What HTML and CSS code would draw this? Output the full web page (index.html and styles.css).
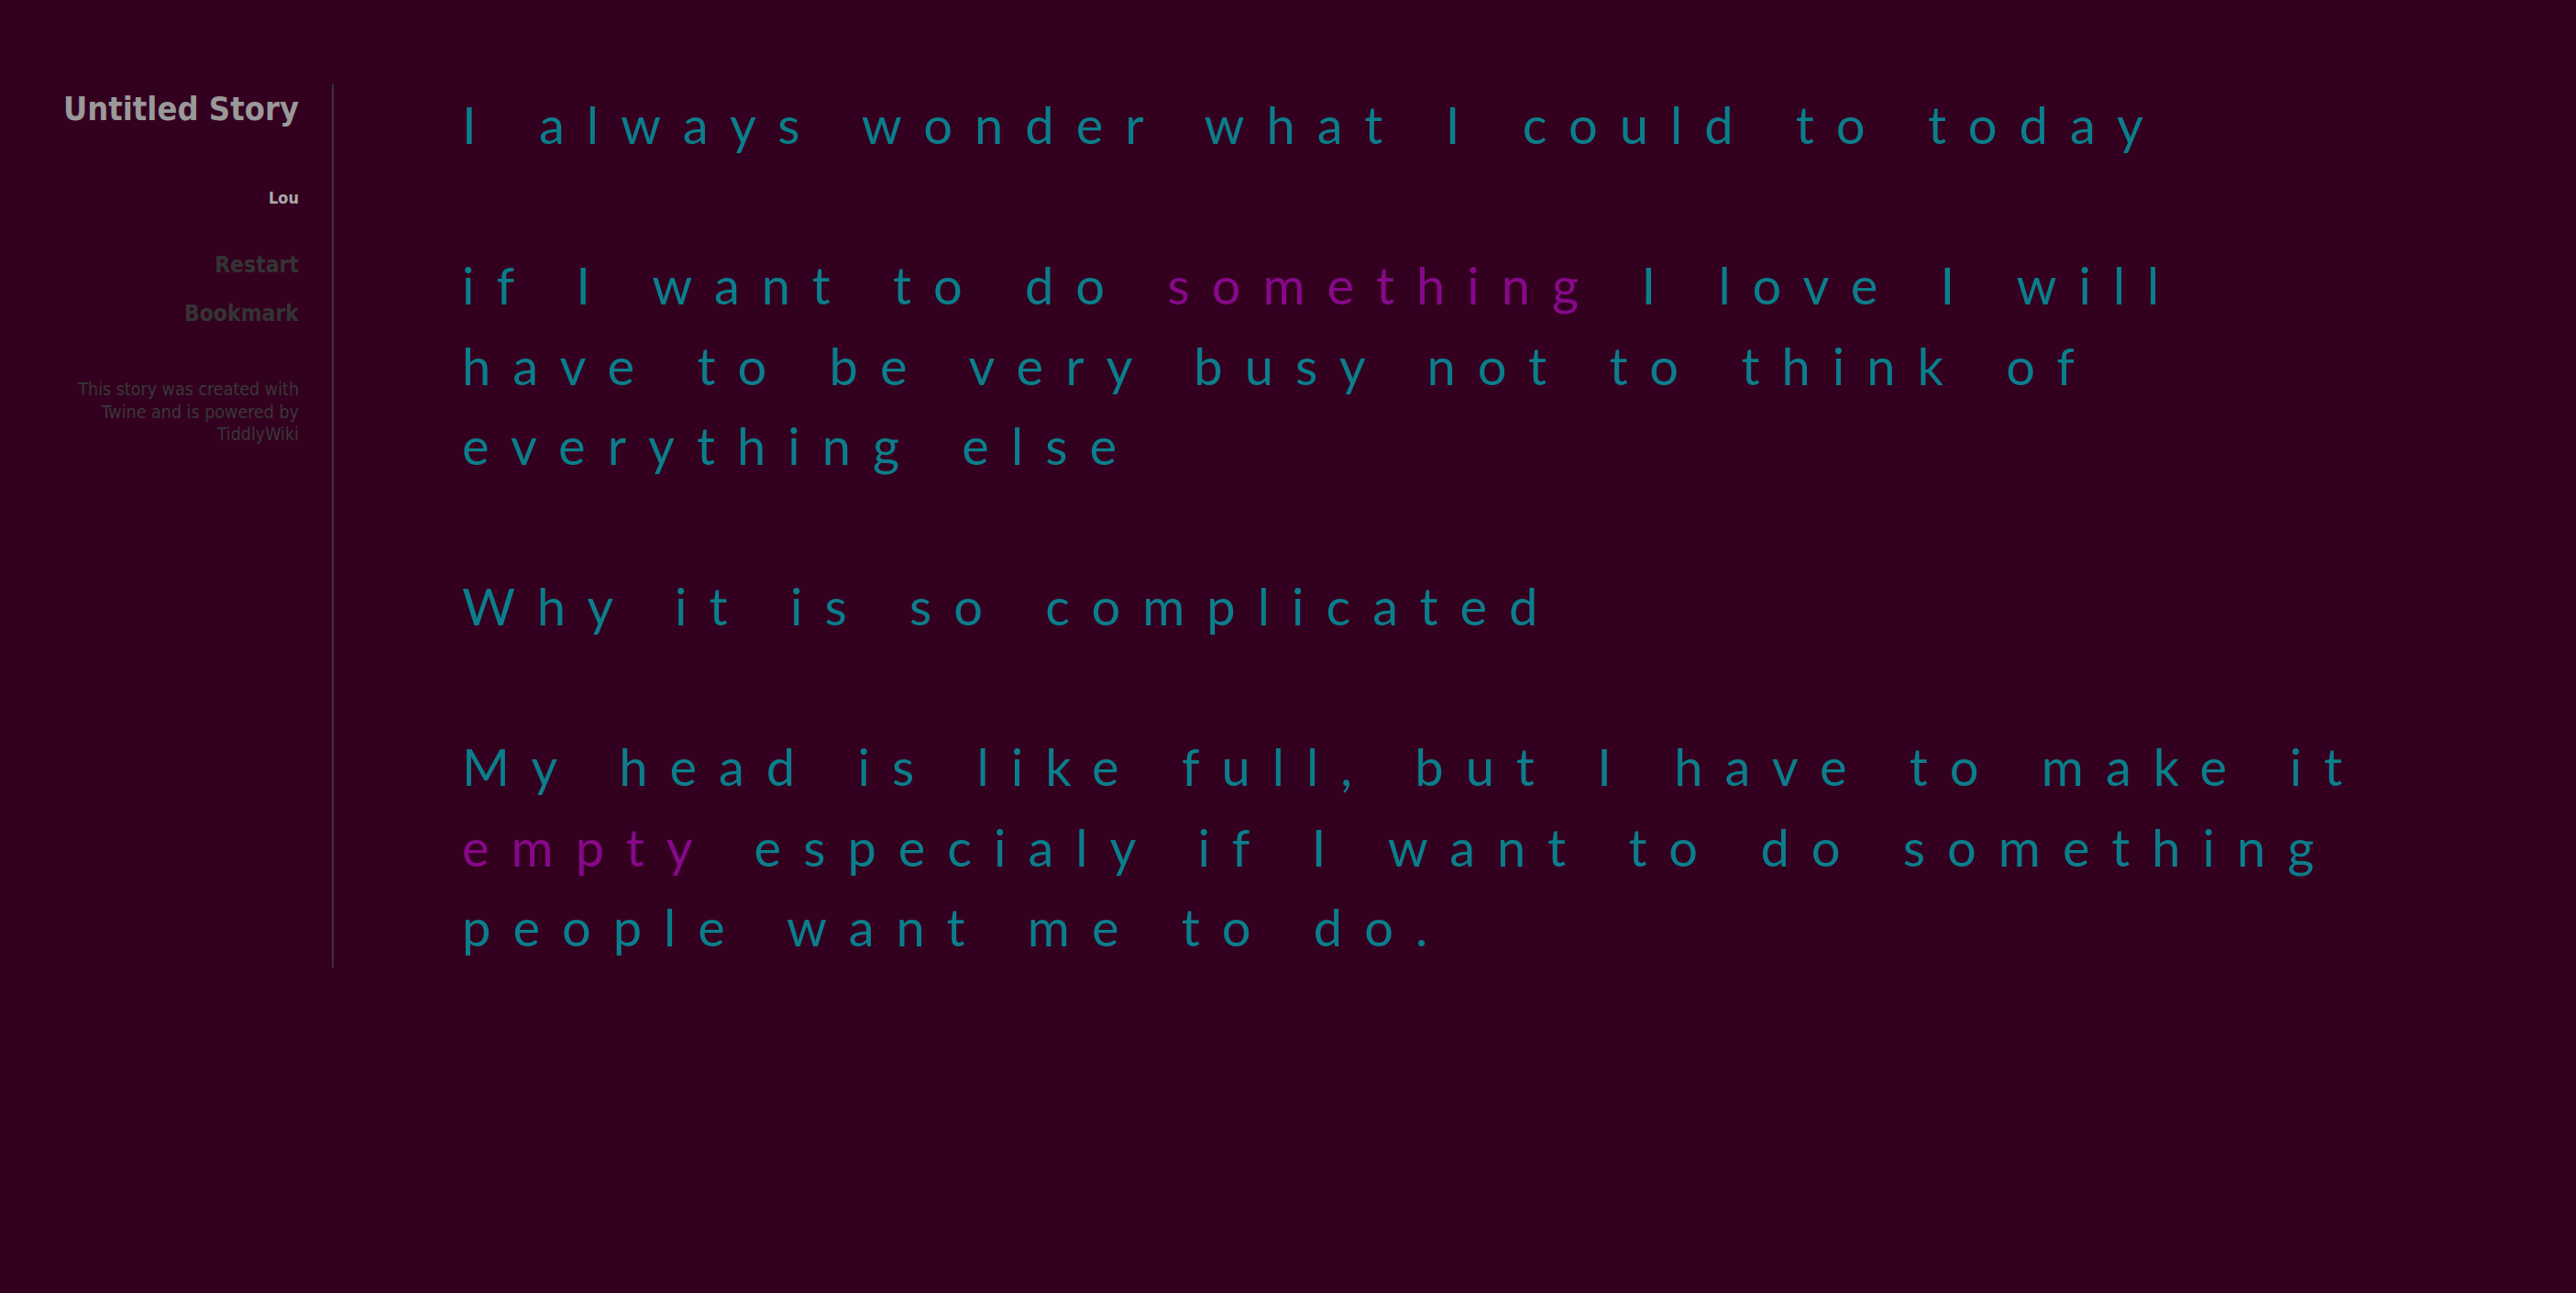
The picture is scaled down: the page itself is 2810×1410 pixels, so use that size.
FILE: index.html
```html
<!DOCTYPE html>
<html lang="en">
<head>
<meta charset="utf-8">
<title>Untitled Story</title>
<link rel="stylesheet" href="styles.css">
</head>
<body>
<div class="page">
  <aside class="sidebar">
    <h1 class="story-title">Untitled Story</h1>
    <div class="author">Lou</div>
    <ul class="menu">
      <li class="menu-item">Restart</li>
      <li class="menu-item">Bookmark</li>
    </ul>
    <p class="credits">This story was created with Twine and is powered by TiddlyWiki</p>
  </aside>
  <main class="passages">
    <div class="passage">
      <p class="para">I always wonder what I could to today</p>
      <p class="para">if I want to do <span class="link">something</span> I love I will have to be very busy not to think of everything else</p>
      <p class="para">Why it is so complicated</p>
      <p class="para">My head is like full, but I have to make it <span class="link">empty</span> especialy if I want to do something people want me to do.</p>
    </div>
  </main>
</div>
</body>
</html>
```
FILE: styles.css
```css
html, body {
  margin: 0;
  padding: 0;
  background: #330020;
}
body {
  min-height: 1410px;
  font-family: "DejaVu Sans", sans-serif;
}
.page {
  display: flex;
  align-items: flex-start;
}
.sidebar {
  width: 260px;
  margin-left: 66px;
  margin-right: 36px;
  padding-top: 97px;
  text-align: right;
  font-family: "DejaVu Sans Condensed", "DejaVu Sans", sans-serif;
  font-stretch: condensed;
}
.story-title {
  margin: 0;
  font-size: 36px;
  line-height: 44px;
  font-weight: bold;
  color: #999999;
}
.author {
  margin-top: 63px;
  font-size: 18px;
  line-height: 24px;
  font-weight: bold;
  color: #aaaaaa;
}
.menu {
  list-style: none;
  margin: 46px 0 0 0;
  padding: 0;
  display: flex;
  flex-direction: column;
  gap: 23px;
}
.menu-item {
  font-size: 24.5px;
  line-height: 30px;
  font-weight: bold;
  color: #343434;
}
.credits {
  margin: 56px 0 0 0;
  font-size: 19.5px;
  line-height: 24.5px;
  color: #383838;
}
.passages {
  margin-top: 92px;
  border-left: 2px solid #363636;
  padding-left: 140px;
  width: 2110px;
}
.passage {
  font-family: "Lato", "Open Sans", sans-serif;
  font-size: 56px;
  line-height: 87.5px;
  letter-spacing: 24px;
  word-spacing: 6px;
  color: #0b7e8c;
}
.para {
  margin: 0 0 87.5px 0;
}
.para:last-child {
  margin-bottom: 0;
}
.link {
  color: #87088a;
}
```
